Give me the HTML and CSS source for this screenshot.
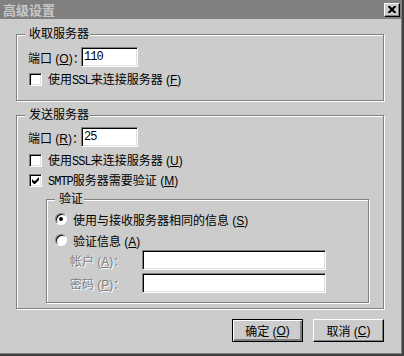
FILE: index.html
```html
<!DOCTYPE html>
<html lang="zh-CN">
<head>
    <meta charset="UTF-8">
    <title>高级设置</title>
    <link rel="stylesheet" href="styles.css">
</head>
<body>
    <div class="window">
        <div class="titlebar">
            <span class="title">高级设置</span>
            <span class="close-btn">
                <svg width="8" height="7" viewBox="0 0 8 7"><path d="M0 0h2l2 2 2-2h2v1l-2.5 2.5 2.5 2.5v1h-2l-2-2-2 2h-2v-1l2.5-2.5-2.5-2.5z" fill="#000"/></svg>
            </span>
        </div>

        <div class="content">
            <!-- incoming server -->
            <fieldset class="group group-in">
                <legend>收取服务器</legend>
                <div class="row first">
                    <label class="field-label">端口 (<u>O</u>)：</label>
                    <span class="textbox port latin">110</span>
                </div>
                <div class="row r2">
                    <span class="checkbox"></span>
                    <span>使用<span class="latin">SSL</span>来连接服务器 (<u>F</u>)</span>
                </div>
            </fieldset>

            <!-- outgoing server -->
            <fieldset class="group group-out">
                <legend>发送服务器</legend>
                <div class="row first">
                    <label class="field-label">端口 (<u>R</u>)：</label>
                    <span class="textbox port latin">25</span>
                </div>
                <div class="row r3">
                    <span class="checkbox"></span>
                    <span>使用<span class="latin">SSL</span>来连接服务器 (<u>U</u>)</span>
                </div>
                <div class="row">
                    <span class="checkbox checked">
                        <svg width="7" height="7" viewBox="0 0 7 7"><path d="M0 2v3l2 2h1l4-4v-3l-4 4h-1z" fill="#000"/></svg>
                    </span>
                    <span><span class="latin">SMTP</span>服务器需要验证 (<u>M</u>)</span>
                </div>

                <fieldset class="group group-auth">
                    <legend>验证</legend>
                    <div class="row first">
                        <span class="radio"><span class="dot"></span></span>
                        <span>使用与接收服务器相同的信息 (<u>S</u>)</span>
                    </div>
                    <div class="row r1">
                        <span class="radio"></span>
                        <span>验证信息 (<u>A</u>)</span>
                    </div>
                    <div class="row cred">
                        <label class="field-label disabled">帐户 (<u>A</u>)：</label>
                        <span class="textbox wide"></span>
                    </div>
                    <div class="row cred r3">
                        <label class="field-label disabled">密码 (<u>P</u>)：</label>
                        <span class="textbox wide"></span>
                    </div>
                </fieldset>
            </fieldset>

            <div class="buttons">
                <span class="button default">确定 (<u>O</u>)</span>
                <span class="button">取消 (<u>C</u>)</span>
            </div>
        </div>
    </div>
</body>
</html>
```

FILE: styles.css
```css
/* General styles */
body {
    margin: 0;
    padding: 0;
    font-family: "Liberation Sans", "Noto Sans CJK SC", sans-serif;
    font-size: 12px;
    color: #000;
    background-color: #cccccc;
}

u {
    text-decoration: underline;
    text-underline-offset: 1px;
}

/* Window frame */
.window {
    width: 404px;
    height: 356px;
    box-sizing: border-box;
    background-color: #cccccc;
    border-right: 2px solid #404040;
    border-bottom: 2px solid #404040;
    box-shadow: inset -1px -1px 0 #808080;
    display: flex;
    flex-direction: column;
}

.titlebar {
    height: 19px;
    background-color: #808080;
    display: flex;
    align-items: center;
    justify-content: space-between;
    padding: 0 2px 0 3px;
}

.title {
    color: #c8c8c8;
    font-weight: bold;
    font-size: 13px;
    font-family: "Noto Sans CJK SC", sans-serif;
}

.close-btn {
    width: 16px;
    height: 14px;
    box-sizing: border-box;
    background-color: #cccccc;
    border-top: 1px solid #fff;
    border-left: 1px solid #fff;
    border-right: 1px solid #000;
    border-bottom: 1px solid #000;
    box-shadow: inset -1px -1px 0 #808080;
    display: flex;
    align-items: center;
    justify-content: center;
}

.content {
    padding: 8px 0 0 16px;
}

/* Group boxes */
.group {
    margin: 0;
    border: 1px solid #808080;
    box-shadow: 1px 1px 0 #ffffff, inset 1px 1px 0 #ffffff;
    padding: 0 0 0 11px;
    box-sizing: border-box;
}

.group legend {
    padding: 0 1px 0 4px;
    margin-left: -3px;
    line-height: 14px;
    background-color: #cccccc;
}

.group-in {
    width: 368px;
    padding-bottom: 11px;
}

.group-out {
    width: 368px;
    margin-top: 7px;
    padding-bottom: 5px;
}

.group-auth {
    width: 323px;
    margin: 2px 0 0 18px;
    padding: 0 0 9px 8px;
}

.group-auth legend {
    margin-left: 0;
}

.row {
    display: flex;
    align-items: center;
    height: 20px;
    white-space: nowrap;
}

.row.first {
    margin-top: 5px;
}

.group-in .row.first {
    margin-top: 6px;
}

.group-auth .row.first {
    margin-top: 3px;
}

.row.r1 {
    margin-top: 1px;
}

.row.r2 {
    margin-top: 2px;
}

.row.r3 {
    margin-top: 3px;
}

.row.cred {
    padding-left: 15px;
}

.field-label {
    width: 53px;
}

.cred .field-label {
    width: 72px;
}

.disabled {
    color: #808080;
    text-shadow: 1px 1px 0 #ffffff;
}

.latin {
    font-family: "Liberation Mono", monospace;
    font-size: 12px;
    letter-spacing: -1px;
}

/* Sunken controls */
.textbox {
    display: inline-block;
    height: 20px;
    box-sizing: border-box;
    background-color: #ffffff;
    border-top: 1px solid #808080;
    border-left: 1px solid #808080;
    border-right: 1px solid #ffffff;
    border-bottom: 1px solid #ffffff;
    box-shadow: inset 1px 1px 0 #000, inset -1px -1px 0 #dfdfdf;
    padding: 2px 2px;
    line-height: 15px;
}

.port {
    width: 57px;
}

.wide {
    width: 184px;
}

.checkbox {
    width: 13px;
    height: 13px;
    box-sizing: border-box;
    background-color: #ffffff;
    border-top: 1px solid #808080;
    border-left: 1px solid #808080;
    border-right: 1px solid #ffffff;
    border-bottom: 1px solid #ffffff;
    box-shadow: inset 1px 1px 0 #000, inset -1px -1px 0 #dfdfdf;
    margin: 0 6px 0 1px;
    display: flex;
    align-items: center;
    justify-content: center;
}

.radio {
    width: 12px;
    height: 12px;
    box-sizing: border-box;
    border-radius: 50%;
    background-color: #ffffff;
    border: 1px solid;
    border-color: #808080 #ffffff #ffffff #808080;
    box-shadow: inset 1px 1px 0 #000;
    margin: 0 6px 0 0;
    display: flex;
    align-items: center;
    justify-content: center;
}

.dot {
    width: 4px;
    height: 4px;
    border-radius: 50%;
    background-color: #000;
}

/* Buttons */
.buttons {
    display: flex;
    gap: 10px;
    justify-content: flex-end;
    width: 368px;
    margin-top: 10px;
}

.button {
    width: 71px;
    height: 23px;
    box-sizing: border-box;
    display: flex;
    align-items: center;
    justify-content: center;
    background-color: #cccccc;
    border-top: 1px solid #ffffff;
    border-left: 1px solid #ffffff;
    border-right: 1px solid #000;
    border-bottom: 1px solid #000;
    box-shadow: inset -1px -1px 0 #808080;
}

.button.default {
    border: 1px solid #000;
    box-shadow: inset 1px 1px 0 #ffffff, inset -2px -2px 0 #808080;
}
```
